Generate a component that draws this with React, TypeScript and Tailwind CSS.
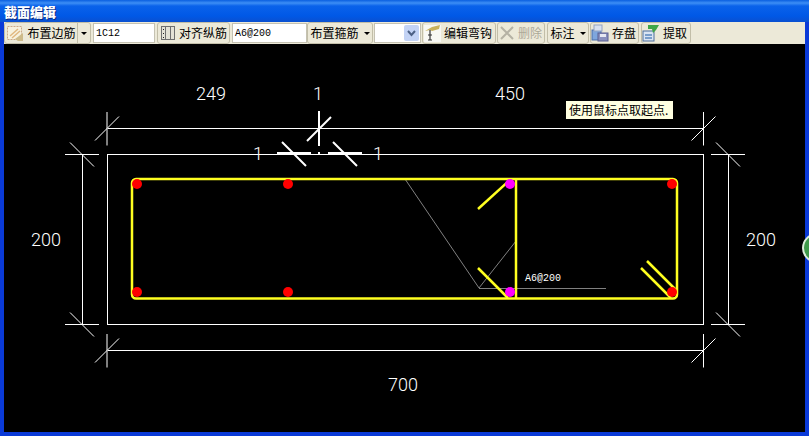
const cjk = "font-['Noto_Sans_CJK_SC','Liberation_Sans',sans-serif]"

const Btn = ({ label, icon, arrow, disabled, w, start }: { label: string; icon?: React.ReactNode; arrow?: boolean; disabled?: boolean; w: string; start?: string }) => (
  <div
    className={`${w} ${start ?? 'justify-center'} h-[22px] shrink-0 flex items-center gap-[3px] rounded-[3px] border border-[#c2bea8] bg-[#ece9d8] text-[12px] leading-none ${disabled ? 'text-[#aca899]' : 'text-black'}`}
  >
    {icon}
    <span>{label}</span>
    {arrow && <span className="ml-[2px] w-0 h-0 border-x-[3px] border-x-transparent border-t-[3px] border-t-black" />}
  </div>
)

const TextBox = ({ value, w }: { value: string; w: string }) => (
  <div className={`${w} h-[20px] shrink-0 flex items-center px-[2px] bg-white border border-[#c5c2b2] font-['Liberation_Mono',monospace] text-[10px] text-black`}>
    {value}
  </div>
)

const EdgeIcon = () => (
  <svg width="18" height="18" viewBox="0 0 18 18" className="shrink-0">
    <rect x="1.5" y="2.5" width="14" height="13" fill="#f7f2df" stroke="#c9a98a" strokeDasharray="2 1" />
    <path d="M4 12 L12 5 M6 14 L14 7" stroke="#e0b880" strokeWidth="1.5" />
    <path d="M9 15 L17 9 L17 17 L12 17 Z" fill="#cdbb8a" />
  </svg>
)

const AlignIcon = () => (
  <svg width="16" height="16" viewBox="0 0 16 16" className="shrink-0">
    <rect x="1.5" y="1.5" width="13" height="13" fill="#e4e2d6" stroke="#6f6f6f" />
    <path d="M5.5 2 V14 M10.5 2 V14" stroke="#6f6f6f" />
    <path d="M3.5 4 V5 M3.5 8 V9 M3.5 12 V13" stroke="#222" />
  </svg>
)

const HookIcon = () => (
  <svg width="18" height="18" viewBox="0 0 18 18" className="shrink-0">
    <rect x="1" y="1" width="17" height="17" fill="#f8f8f4" />
    <path d="M2 7 L9 3 L17 1 L16 5 L9 7 L7 6 Z" fill="#c8b15c" />
    <path d="M7 6 V16 M5 16 H9 M5 11 H9" stroke="#333" strokeWidth="1.2" fill="none" />
  </svg>
)

const DeleteIcon = () => (
  <svg width="16" height="16" viewBox="0 0 16 16" className="shrink-0">
    <path d="M2 2 L14 14 M14 2 L2 14" stroke="#b5b2a4" strokeWidth="2" />
  </svg>
)

const SaveIcon = () => (
  <svg width="18" height="18" viewBox="0 0 18 18" className="shrink-0">
    <rect x="1" y="6" width="9" height="10" fill="#7ea6dd" stroke="#4a6ea8" />
    <rect x="3" y="1" width="8" height="6" fill="#d9e1ef" stroke="#93a3c2" />
    <rect x="7" y="9" width="10" height="8" fill="#8a90bd" stroke="#585f92" />
    <rect x="9" y="10" width="6" height="3" fill="#e6e8f2" />
  </svg>
)

const LoadIcon = () => (
  <svg width="18" height="18" viewBox="0 0 18 18" className="shrink-0">
    <rect x="1" y="7" width="11" height="10" fill="#d9e4f2" stroke="#4d6f9c" />
    <path d="M3 11 H10 M3 14 H10" stroke="#5b86bd" strokeWidth="1.5" />
    <path d="M6 1 H17 L14 6 L11 9 L10 5 H6 Z" fill="#3fa648" />
  </svg>
)

const Toolbar = () => (
  <div className={`h-[22px] flex items-center bg-[#ece9d8] ${cjk}`}>
    <div className="w-[87px] h-[22px] shrink-0 flex items-center rounded-[3px] border border-[#c2bea8] text-[12px] leading-none text-black">
      <div className="w-[73px] flex items-center justify-center gap-[3px] border-r border-[#c2bea8] h-full">
        <EdgeIcon />
        <span>布置边筋</span>
      </div>
      <div className="flex-1 flex items-center justify-center">
        <span className="w-0 h-0 border-x-[3px] border-x-transparent border-t-[3px] border-t-black" />
      </div>
    </div>
    <div className="w-[2px] shrink-0" />
    <TextBox value="1C12" w="w-[62px]" />
    <div className="w-[2px] shrink-0" />
    <Btn label="对齐纵筋" icon={<AlignIcon />} w="w-[73px]" start="justify-start pl-[2px]" />
    <div className="w-[2px] shrink-0" />
    <TextBox value="A6@200" w="w-[75px]" />
    <Btn label="布置箍筋" arrow w="w-[66px]" />
    <div className="w-px shrink-0" />
    <div className="w-[47px] h-[20px] shrink-0 flex items-center justify-end bg-white border border-[#c5c2b2] p-px">
      <div className="w-[15px] h-full flex items-center justify-center bg-[#c3d3f5] rounded-[2px]">
        <svg width="9" height="7" viewBox="0 0 9 7">
          <path d="M1 1 L4.5 5 L8 1" stroke="#4d6185" strokeWidth="2" fill="none" />
        </svg>
      </div>
    </div>
    <div className="w-px shrink-0" />
    <Btn label="编辑弯钩" icon={<HookIcon />} w="w-[74px]" start="justify-start" />
    <div className="w-px shrink-0" />
    <Btn label="删除" icon={<DeleteIcon />} disabled w="w-[48px]" start="justify-start pl-px" />
    <div className="w-[2px] shrink-0" />
    <Btn label="标注" arrow w="w-[42px]" />
    <div className="w-px shrink-0" />
    <Btn label="存盘" icon={<SaveIcon />} w="w-[49px]" start="justify-start" />
    <div className="w-[2px] shrink-0" />
    <Btn label="提取" icon={<LoadIcon />} w="w-[50px]" start="justify-start" />
  </div>
)

const Tick = ({ x, y, dir }: { x: number; y: number; dir: 'h' | 'v' }) =>
  dir === 'v' ? (
    <g>
      <path d={`M${x} ${y - 16.5} V${y + 17}`} />
      <path d={`M${x - 12} ${y + 12} L${x + 12} ${y - 12}`} />
    </g>
  ) : (
    <g>
      <path d={`M${x - 17} ${y} H${x + 17}`} />
      <path d={`M${x - 12} ${y - 12} L${x + 12} ${y + 12}`} />
    </g>
  )

const dims = [
  { t: '249', x: 211, y: 100 },
  { t: '1', x: 318, y: 100 },
  { t: '450', x: 510, y: 100 },
  { t: '1', x: 258, y: 160 },
  { t: '1', x: 378, y: 160 },
  { t: '200', x: 46, y: 246 },
  { t: '200', x: 761, y: 246 },
  { t: '700', x: 403, y: 391 }
]

const dots = [
  [137, 184, '#ff0000'],
  [288, 184, '#ff0000'],
  [672, 184, '#ff0000'],
  [137, 292, '#ff0000'],
  [288, 292, '#ff0000'],
  [672, 292, '#ff0000'],
  [510, 184, '#ff00ff'],
  [510, 292, '#ff00ff']
] as const

const Section = () => (
  <svg viewBox="4 44 801 388" width="801" height="388" className="block">
    <g stroke="#ffffff" strokeWidth="1" fill="none" shapeRendering="crispEdges">
      <path d="M107.5 154.5 H703.5 V324.5 H107.5 Z" />
      <path d="M107.5 128.5 H703.5" />
      <path d="M107.5 350.5 H703.5" />
      <path d="M82.5 154.5 V324.5" />
      <path d="M728.5 154.5 V324.5" />
    </g>
    <g stroke="#ffffff" strokeWidth="1" fill="none">
      <Tick x={107} y={128.5} dir="v" />
      <Tick x={703.5} y={128.5} dir="v" />
      <Tick x={107} y={350.5} dir="v" />
      <Tick x={703.5} y={350.5} dir="v" />
      <Tick x={82} y={154.5} dir="h" />
      <Tick x={82} y={324.5} dir="h" />
      <Tick x={728} y={154.5} dir="h" />
      <Tick x={728} y={324.5} dir="h" />
    </g>
    <g stroke="#ffffff" strokeWidth="2" fill="none">
      <path d="M319 111 V146" />
      <path d="M307 141 L331 117" />
      <path d="M277 153 H311 M318 153 H320 M328 153 H362" />
      <path d="M282 142 L306 166 M333 142 L357 166" />
    </g>
    <g stroke="#808080" strokeWidth="1" fill="none">
      <path d="M405 179 L479 288 L516 241" />
      <path d="M479 288.5 H606" />
    </g>
    <g stroke="#ffff20" strokeWidth="2.5" fill="none">
      <rect x="132" y="179" width="545" height="119.5" rx="4" />
      <path d="M516 179 V298" />
      <path d="M478 209 L511 179" />
      <path d="M478 268 L508 298" />
      <path d="M641 268 L671 298" />
      <path d="M647 261 L677 291" />
    </g>
    {dots.map(([cx, cy, c]) => (
      <circle key={`${cx}-${cy}`} cx={cx} cy={cy} r="5" fill={c} />
    ))}
    <g fill="#ffffff" fontFamily="Roboto, sans-serif" fontWeight="300" fontSize="18" textAnchor="middle">
      {dims.map((d) => (
        <text key={`${d.t}-${d.x}`} x={d.x} y={d.y}>
          {d.t}
        </text>
      ))}
    </g>
    <text x="525" y="281" fill="#ffffff" fontFamily="'Liberation Mono', monospace" fontSize="10">
      A6@200
    </text>
  </svg>
)

const App = () => {
  return (
    <div className="relative w-[809px] h-[436px] overflow-hidden flex flex-col bg-[#0a3ad8]">
      <div className={`h-[22px] shrink-0 pl-[4px] pt-[4px] bg-[linear-gradient(180deg,#0a5fe0_0px,#3d8ef5_3px,#0a62ea_6px,#0058e6_16px,#0a50d0_22px)] ${cjk}`}>
        <span className="block text-[13px] leading-[16px] font-black text-white [text-shadow:1px_1px_0_#0a2a80]">截面编辑</span>
      </div>
      <div className="flex-1 flex flex-col px-[4px] pb-[4px] min-h-0">
        <Toolbar />
        <div className="relative flex-1 bg-black min-h-0">
          <Section />
          <div className={`absolute left-[562px] top-[57px] w-[107px] h-[18px] flex items-center pl-[3px] bg-[#ffffe1] text-[12px] leading-none text-black whitespace-nowrap ${cjk}`}>
            使用鼠标点取起点.
          </div>
        </div>
      </div>
      <div className="absolute left-[802px] top-[233px] w-[30px] h-[30px] rounded-full bg-[#3f9a4a] border-2 border-[#dfeedd]" />
    </div>
  )
}

export default App
